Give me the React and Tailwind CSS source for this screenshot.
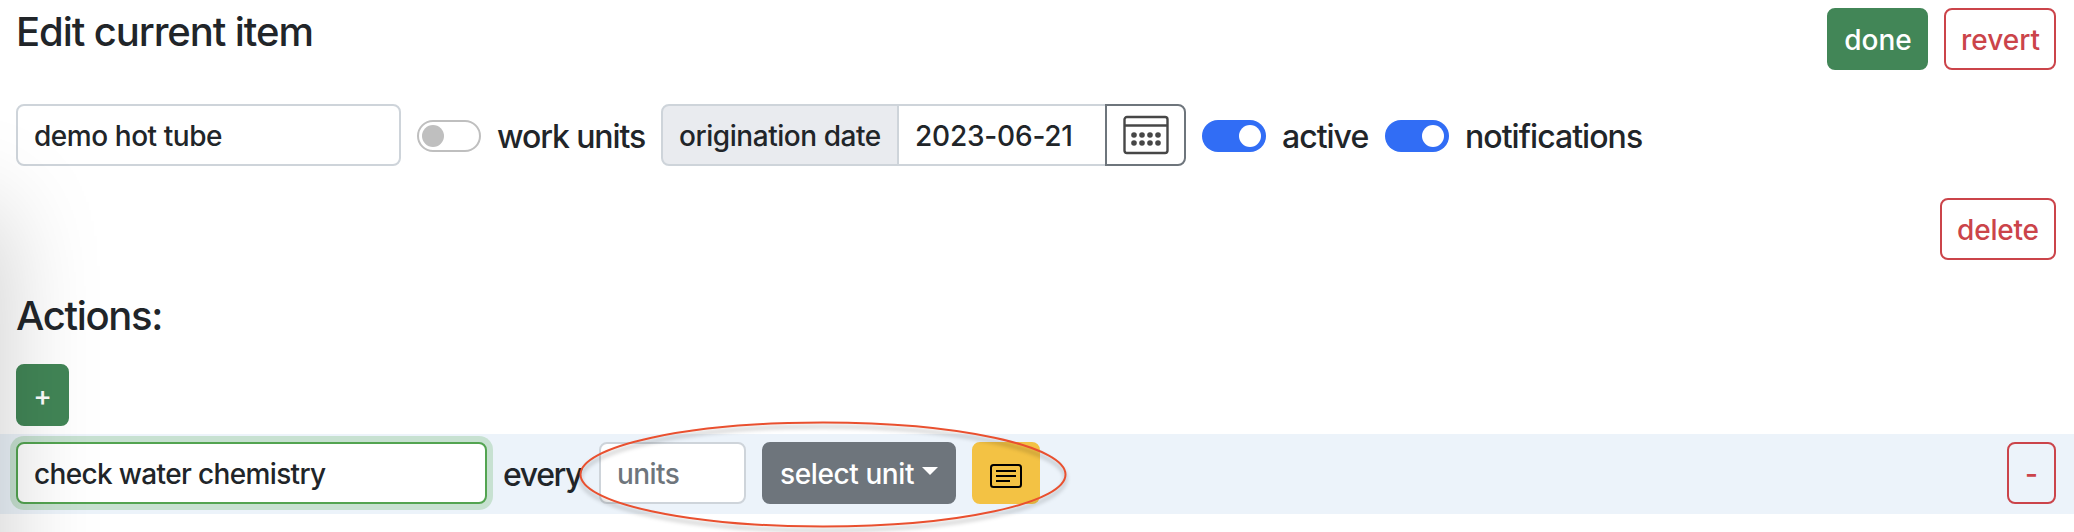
const box = "box-border flex h-[62px] shrink-0 items-center rounded-lg border-2 text-[28px] leading-none font-[450] whitespace-nowrap";
const label = "ml-4 shrink-0 pt-1 text-[32px] leading-none font-[450] whitespace-nowrap";

function Switch({ on = false }) {
  return on ? (
    <span className="mt-px flex h-8 w-16 shrink-0 items-center justify-end rounded-full bg-[#316df5] pr-[5px]">
      <span className="size-[22px] rounded-full bg-white" />
    </span>
  ) : (
    <span className="mt-px flex h-8 w-16 shrink-0 items-center rounded-full border-2 border-[#bfbfbf] bg-white pl-[3px]">
      <span className="size-[22px] rounded-full bg-[#bfbfbf]" />
    </span>
  );
}

function CalendarIcon() {
  return (
    <svg width="46" height="40" viewBox="0 0 46 40" fill="none" stroke="#474747" strokeWidth="2.4">
      <rect x="1.5" y="2" width="43" height="36" rx="2.5" />
      <path d="M1.5 10.5h43" />
      <g fill="#474747" stroke="none">
        {[11, 19, 27, 35].map((x) => [20, 28].map((y) => <circle key={x + "-" + y} cx={x} cy={y} r="2.8" />))}
      </g>
    </svg>
  );
}

function NoteIcon() {
  return (
    <svg width="32" height="24" viewBox="0 0 32 24" fill="none" stroke="#000" strokeWidth="2">
      <rect x="1" y="1" width="30" height="22" rx="2.5" />
      <path d="M6 7h20M6 12h20M6 17h14" />
    </svg>
  );
}

export default function App() {
  return (
    <div className="relative flex h-[532px] w-[2074px] flex-col overflow-hidden bg-white font-['Inter',sans-serif] text-[#212529]">
      <header className="flex h-[104px] items-start justify-between pt-2 pr-[18px] pl-4">
        <h1 className="text-[40px] leading-[48px] font-medium tracking-[-1.08px]">Edit current item</h1>
        <div className="flex gap-4">
          <button className={`${box} w-[101px] justify-center border-[#428657] bg-[#428657] pt-0.5 pl-px text-white`}>done</button>
          <button className={`${box} w-[112px] justify-center border-[#cb444a] pt-0.5 pl-px text-[#cb444a]`}>revert</button>
        </div>
      </header>

      <div className="flex h-[62px] items-center pl-4">
        <div className={`${box} mr-4 w-[385px] border-[#ced4da] pt-0.5 pl-4 tracking-[-0.45px]`}>demo hot tube</div>
        <Switch />
        <span className={`${label} w-[164px] tracking-[-1.1px]`}>work units</span>
        <div className="mr-4 flex">
          <span className={`${box} w-[238px] rounded-r-none border-[#ced4da] bg-[#e9ebef] pt-0.5 pl-4 tracking-[-0.45px]`}>origination date</span>
          <span className={`${box} -ml-0.5 w-[210px] rounded-none border-[#ced4da] bg-white pt-0.5 pl-4 tracking-[-0.2px]`}>2023-06-21</span>
          <button className={`${box} -ml-0.5 w-[81px] justify-center rounded-l-none border-[#6e757c] bg-white`}>
            <CalendarIcon />
          </button>
        </div>
        <Switch on />
        <span className={`${label} w-[103px] tracking-[-1px]`}>active</span>
        <Switch on />
        <span className={`${label} tracking-[-0.95px]`}>notifications</span>
      </div>

      <div className="flex h-[94px] items-end justify-end pr-[18px]">
        <button className={`${box} w-[116px] justify-center border-[#cb444a] pt-0.5 tracking-[-0.2px] text-[#cb444a]`}>delete</button>
      </div>

      <section className="flex flex-col pt-8">
        <h2 className="h-[72px] pl-4 text-[40px] leading-[48px] font-medium tracking-[-1.35px]">Actions:</h2>
        <button className={`${box} ml-4 w-[53px] justify-center border-[#428657] bg-[#428657] pt-0.5 text-white`}>+</button>
        <div className="mt-2 flex h-20 items-start bg-[#ecf3fa] pt-2 pr-[18px] pl-4">
          <div className={`${box} w-[471px] border-[#53a451] bg-white pt-0.5 pl-4 tracking-[-0.65px] ring-[6px] ring-[#c7e1d1]`}>check water chemistry</div>
          <span className={`${label} mt-[13px] w-24 tracking-[-1.4px]`}>every</span>
          <div className={`${box} w-[147px] border-[#ced4da] bg-white pt-0.5 pl-4 tracking-[-0.6px] text-[#6e757c]`}>units</div>
          <button className={`${box} ml-4 w-[194px] gap-2 border-[#6e757c] bg-[#6e757c] pt-0.5 pl-4 tracking-[-0.4px] text-white`}>
            select unit
            <span className="mb-1.5 border-x-8 border-t-8 border-x-transparent border-t-white" />
          </button>
          <button className={`${box} ml-4 w-[68px] justify-center border-[#f3c244] bg-[#f3c244] pt-[5px]`}>
            <NoteIcon />
          </button>
          <button className={`${box} ml-auto w-[49px] justify-center border-[#cb444a] pt-0.5 text-[#cb444a]`}>-</button>
        </div>
      </section>

      <div className="pointer-events-none absolute top-[210px] -left-[100px] h-[500px] w-[100px] shadow-[0_0_100px_0_rgba(0,0,0,0.21)]" />
      <svg className="pointer-events-none absolute top-[412px] left-[570px] drop-shadow-[0_4px_2px_rgba(0,0,0,0.3)]" width="510" height="120" viewBox="0 0 510 120">
        <ellipse cx="253" cy="62.5" rx="242.5" ry="52" fill="none" stroke="#e9502f" strokeWidth="2" />
      </svg>
    </div>
  );
}
